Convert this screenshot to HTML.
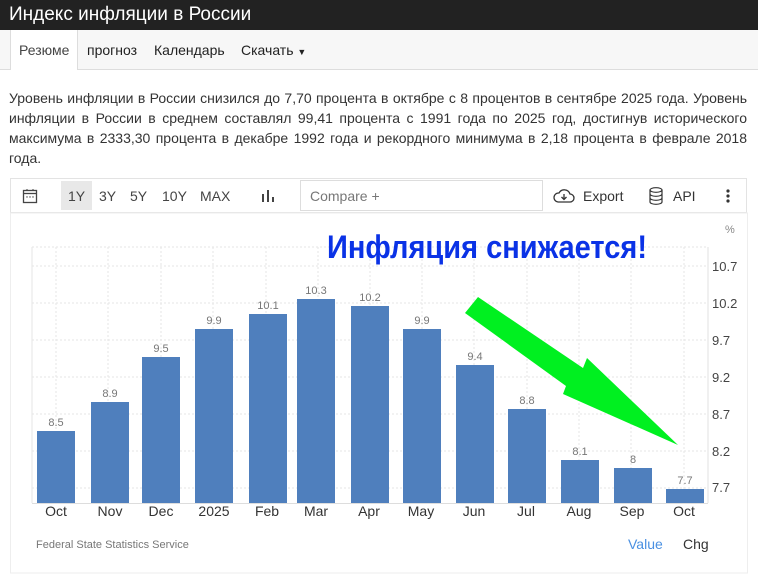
<!DOCTYPE html>
<html><head><meta charset="utf-8"><style>
body{margin:0;width:758px;height:574px;background:#fff;font-family:"Liberation Sans",Arial,sans-serif;position:relative;overflow:hidden;color:#222}
.top{position:absolute;left:0;top:0;width:758px;height:30px;background:#222;color:#fff;font-size:19px;line-height:30px;padding-left:9px;box-sizing:border-box}
.nav{position:absolute;left:0;top:30px;width:758px;height:39px;background:#f7f7f7;border-bottom:1px solid #ddd}
.nav span{position:absolute;top:12px;font-size:14px;color:#222}
.tab{position:absolute;left:10px;top:0;width:66px;height:40px;background:#fff;border:1px solid #ddd;border-bottom:none;border-top:none}
p{position:absolute;left:9px;top:88px;width:738px;margin:0;font-size:14px;line-height:20px;text-align:justify;color:#333}
.tb{position:absolute;left:10px;top:178px;width:737px;height:35px;border:1px solid #e3e3e3;box-sizing:border-box}
.tb span{position:absolute;top:9px;font-size:14px;color:#444}
</style></head><body>
<div class="top">Индекс инфляции в России</div>
<div class="nav"><div class="tab"></div>
<span style="left:19px;color:#444">Резюме</span><span style="left:87px">прогноз</span><span style="left:154px">Календарь</span><span style="left:241px">Скачать <span style="position:static;font-size:9px">▼</span></span></div>
<p>Уровень инфляции в России снизился до 7,70 процента в октябре с 8 процентов в сентябре 2025 года. Уровень инфляции в России в среднем составлял 99,41 процента с 1991 года по 2025 год, достигнув исторического максимума в 2333,30 процента в декабре 1992 года и рекордного минимума в 2,18 процента в феврале 2018 года.</p>
<div class="tb">
<svg style="position:absolute;left:11px;top:9px" width="16" height="16" viewBox="0 0 16 16"><rect x="1.5" y="2.5" width="13" height="12" fill="none" stroke="#444" stroke-width="1.3"/><line x1="1.5" y1="5.5" x2="14.5" y2="5.5" stroke="#444" stroke-width="1.3"/><line x1="5" y1="1" x2="5" y2="3" stroke="#444"/><line x1="11" y1="1" x2="11" y2="3" stroke="#444"/><circle cx="5" cy="9" r=".7" fill="#444"/><circle cx="8" cy="9" r=".7" fill="#444"/><circle cx="11" cy="9" r=".7" fill="#444"/></svg>
<div style="position:absolute;left:50px;top:2px;width:31px;height:29px;background:#e8e8e8"></div>
<span style="left:57px">1Y</span><span style="left:88px">3Y</span><span style="left:119px">5Y</span><span style="left:151px">10Y</span><span style="left:189px">MAX</span>
<svg style="position:absolute;left:250px;top:10px" width="14" height="14"><rect x="1" y="5" width="2" height="8" fill="#444"/><rect x="6" y="1" width="2" height="12" fill="#444"/><rect x="11" y="8" width="2" height="5" fill="#444"/></svg>
<div style="position:absolute;left:289px;top:1px;width:243px;height:31px;border:1px solid #ddd;box-sizing:border-box"></div>
<span style="left:299px;color:#777">Compare +</span>
<svg style="position:absolute;left:542px;top:9px" width="22" height="16" viewBox="0 0 22 16"><path d="M5 14 H17 A4 4 0 0 0 17 6 A6 6 0 0 0 6 5 A4.5 4.5 0 0 0 5 14 Z" fill="none" stroke="#333" stroke-width="1.3"/><path d="M11 6 V11 M8.5 9 L11 11.5 L13.5 9" fill="none" stroke="#333" stroke-width="1.3"/></svg>
<span style="left:572px;color:#333">Export</span>
<svg style="position:absolute;left:638px;top:8px" width="14" height="18" viewBox="0 0 14 18"><ellipse cx="7" cy="3" rx="6" ry="2.3" fill="none" stroke="#333" stroke-width="1.2"/><path d="M1 3 V15 A6 2.3 0 0 0 13 15 V3 M1 7 A6 2.3 0 0 0 13 7 M1 11 A6 2.3 0 0 0 13 11" fill="none" stroke="#333" stroke-width="1.2"/></svg>
<span style="left:662px;color:#333">API</span>
<svg style="position:absolute;left:714px;top:9px" width="6" height="16"><circle cx="3" cy="3" r="1.6" fill="#333"/><circle cx="3" cy="8" r="1.6" fill="#333"/><circle cx="3" cy="13" r="1.6" fill="#333"/></svg>
</div>
<svg style="position:absolute;left:0;top:0" width="758" height="574" viewBox="0 0 758 574" font-family="Liberation Sans,Arial,sans-serif">
<rect x="10.5" y="213" width="737" height="360" fill="none" stroke="#eee"/>
<g stroke="#e6e6e6" stroke-dasharray="2,2">
<line x1="32" y1="247" x2="708" y2="247"/><line x1="32" y1="266" x2="708" y2="266"/><line x1="32" y1="303" x2="708" y2="303"/><line x1="32" y1="340" x2="708" y2="340"/><line x1="32" y1="377" x2="708" y2="377"/><line x1="32" y1="414" x2="708" y2="414"/><line x1="32" y1="451" x2="708" y2="451"/><line x1="32" y1="488" x2="708" y2="488"/>
<line x1="56" y1="247" x2="56" y2="503"/><line x1="108" y1="247" x2="108" y2="503"/><line x1="161" y1="247" x2="161" y2="503"/><line x1="213" y1="247" x2="213" y2="503"/><line x1="266" y1="247" x2="266" y2="503"/><line x1="318" y1="247" x2="318" y2="503"/><line x1="370" y1="247" x2="370" y2="503"/><line x1="422" y1="247" x2="422" y2="503"/><line x1="474" y1="247" x2="474" y2="503"/><line x1="527" y1="247" x2="527" y2="503"/><line x1="579" y1="247" x2="579" y2="503"/><line x1="631" y1="247" x2="631" y2="503"/><line x1="684" y1="247" x2="684" y2="503"/>
</g>
<line x1="32" y1="247" x2="32" y2="503" stroke="#e6e6e6"/>
<line x1="708" y1="247" x2="708" y2="503" stroke="#e0e0e0"/>
<line x1="32" y1="503.5" x2="708" y2="503.5" stroke="#ddd"/>
<g fill="#4f7fbd">
<rect x="37" y="431" width="38" height="72"/><rect x="91" y="402" width="38" height="101"/><rect x="142" y="357" width="38" height="146"/><rect x="195" y="329" width="38" height="174"/><rect x="249" y="314" width="38" height="189"/><rect x="297" y="299" width="38" height="204"/><rect x="351" y="306" width="38" height="197"/><rect x="403" y="329" width="38" height="174"/><rect x="456" y="365" width="38" height="138"/><rect x="508" y="409" width="38" height="94"/><rect x="561" y="460" width="38" height="43"/><rect x="614" y="468" width="38" height="35"/><rect x="666" y="489" width="38" height="14"/>
</g>
<g fill="#777" font-size="11" text-anchor="middle">
<text x="56" y="426">8.5</text><text x="110" y="397">8.9</text><text x="161" y="352">9.5</text><text x="214" y="324">9.9</text><text x="268" y="309">10.1</text><text x="316" y="294">10.3</text><text x="370" y="301">10.2</text><text x="422" y="324">9.9</text><text x="475" y="360">9.4</text><text x="527" y="404">8.8</text><text x="580" y="455">8.1</text><text x="633" y="463">8</text><text x="685" y="484">7.7</text>
</g>
<g fill="#333" font-size="14" text-anchor="middle">
<text x="56" y="516">Oct</text><text x="110" y="516">Nov</text><text x="161" y="516">Dec</text><text x="214" y="516">2025</text><text x="267" y="516">Feb</text><text x="316" y="516">Mar</text><text x="369" y="516">Apr</text><text x="421" y="516">May</text><text x="474" y="516">Jun</text><text x="526" y="516">Jul</text><text x="579" y="516">Aug</text><text x="632" y="516">Sep</text><text x="684" y="516">Oct</text>
</g>
<g fill="#444" font-size="13">
<text x="712" y="271">10.7</text><text x="712" y="308">10.2</text><text x="712" y="345">9.7</text><text x="712" y="382">9.2</text><text x="712" y="419">8.7</text><text x="712" y="456">8.2</text><text x="712" y="492">7.7</text>
</g>
<text x="725" y="233" fill="#888" font-size="11">%</text>
<text x="36" y="548" fill="#777" font-size="11">Federal State Statistics Service</text>
<text x="628" y="549" fill="#4a90e2" font-size="14">Value</text>
<text x="683" y="549" fill="#333" font-size="14">Chg</text>
<text x="327" y="258" fill="#0a32e6" font-size="32" font-weight="bold" textLength="320" lengthAdjust="spacingAndGlyphs">Инфляция снижается!</text>
<polygon points="478,297 583,368 587,358 678,445 563,394 566,386 465,313" fill="#00f020"/>
</svg>
</body></html>
